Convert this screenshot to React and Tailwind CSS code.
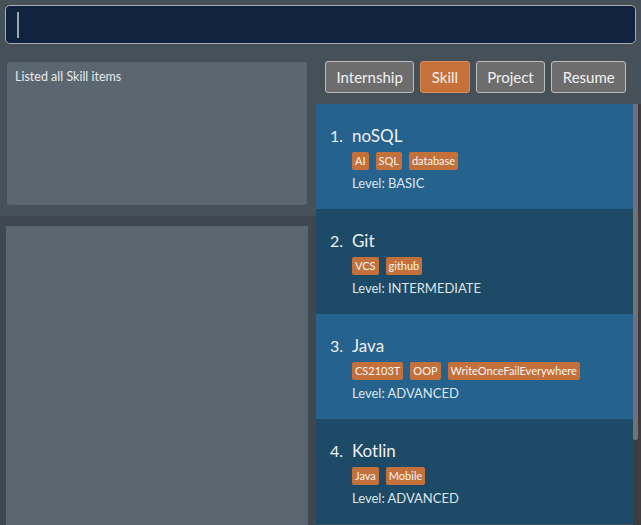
import React from "react";

const skills = [
  { n: 1, name: "noSQL", tags: ["AI", "SQL", "database"], level: "BASIC" },
  { n: 2, name: "Git", tags: ["VCS", "github"], level: "INTERMEDIATE" },
  { n: 3, name: "Java", tags: ["CS2103T", "OOP", "WriteOnceFailEverywhere"], level: "ADVANCED" },
  { n: 4, name: "Kotlin", tags: ["Java", "Mobile"], level: "ADVANCED" },
];

function Tab({ label, active }) {
  return (
    <div
      className={
        "h-[32px] flex items-center px-[10.5px] rounded-[3px] border text-[15px] text-[#f2f2f2] " +
        (active ? "bg-[#c6703a] border-[#d98c5c]" : "bg-[#6d6d6d] border-[#bdbdbd]")
      }
    >
      {label}
    </div>
  );
}

function Card({ item, light }) {
  return (
    <div className={"h-[105px] shrink-0 flex pl-[14px] pt-[21px] " + (light ? "bg-[#25628d]" : "bg-[#1d4a66]")}>
      <div className="w-[21px] text-[16px] leading-[22px] text-[#eef0f2]">{item.n}.</div>
      <div className="flex flex-col pl-[1px]">
        <div className="text-[17px] leading-[22px] text-[#eef0f2]">{item.name}</div>
        <div className="flex gap-[7px] mt-[5px]">
          {item.tags.map((t) => (
            <span
              key={t}
              className="h-[18px] px-[3px] rounded-[2px] bg-[#c4703a] text-[11px] leading-[18px] text-[#f6f6f6]"
            >
              {t}
            </span>
          ))}
        </div>
        <div className="mt-[4px] text-[13px] leading-[18px] text-[#dfe5ea]">Level: {item.level}</div>
      </div>
    </div>
  );
}

export default function App() {
  return (
    <div className="w-[641px] h-[525px] bg-[#465059] overflow-hidden flex flex-col font-['Lato',sans-serif]">
      <div className="h-[50px] shrink-0 px-[5px] pt-[5px]">
        <div className="h-[39px] bg-[#10233f] border border-[#a9abad] rounded-[5px] flex items-center pl-[11px]">
          <div className="w-[2px] h-[26px] bg-[#9ea6ae]" />
        </div>
      </div>
      <div className="flex flex-1 min-h-0">
        <div className="w-[316px] shrink-0 flex flex-col">
          <div className="h-[166px] shrink-0 pt-[12px] pl-[7px] pr-[9px]">
            <div className="h-[143px] bg-[#5b6770] rounded-[3px] px-[8px] pt-[6px] text-[12.5px] text-[#e6e9ec]">
              Listed all Skill items
            </div>
          </div>
          <div className="flex-1 bg-[#3f4850] pt-[10px] pl-[6px] pr-[8px] flex">
            <div className="flex-1 bg-[#5b6770]" />
          </div>
        </div>
        <div className="flex-1 flex flex-col min-w-0">
          <div className="h-[54px] shrink-0 flex gap-[6px] pl-[9px] pt-[11px]">
            <Tab label="Internship" />
            <Tab label="Skill" active />
            <Tab label="Project" />
            <Tab label="Resume" />
          </div>
          <div className="flex-1 flex min-h-0">
            <div className="flex-1 flex flex-col overflow-hidden">
              {skills.map((s, i) => (
                <Card key={s.n} item={s} light={i % 2 === 0} />
              ))}
            </div>
            <div className="w-[8px] shrink-0 bg-[#3b3d40] flex flex-col">
              <div className="h-[336px] w-[5px] bg-[#707274] rounded-b-[2px]" />
            </div>
          </div>
        </div>
      </div>
    </div>
  );
}
